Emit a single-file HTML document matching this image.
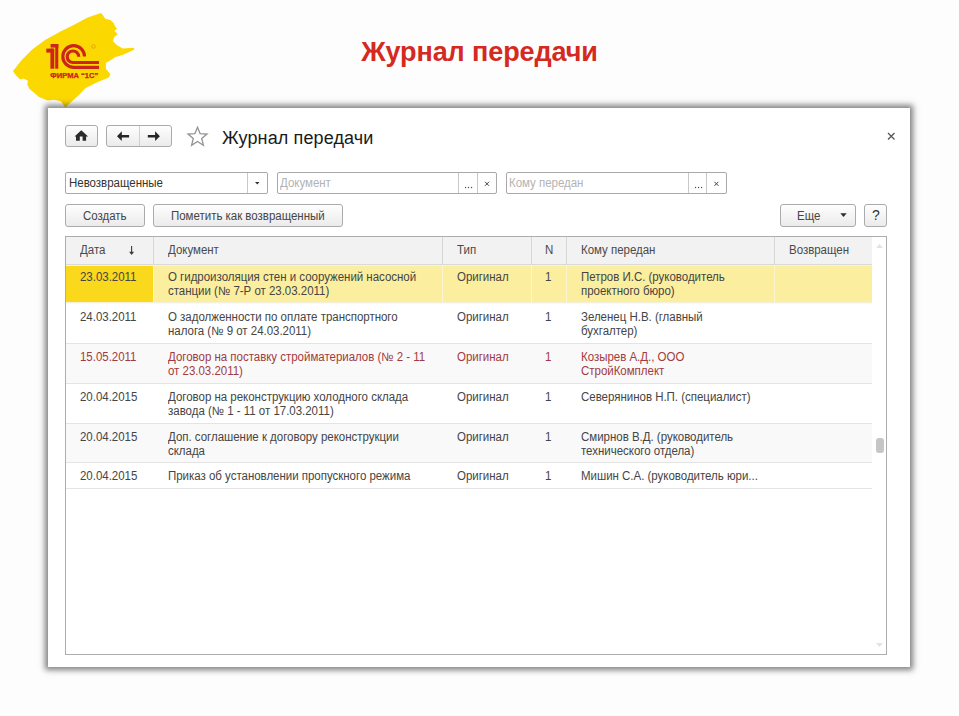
<!DOCTYPE html>
<html><head><meta charset="utf-8">
<style>
*{margin:0;padding:0;box-sizing:border-box}
html,body{width:959px;height:716px;overflow:hidden;background:#fdfdfd;font-family:"Liberation Sans",sans-serif;position:relative}
div,span{position:absolute}
#title{left:0;width:959px;top:39px;height:27px;line-height:27px;text-align:center;font-weight:bold;font-size:27px;letter-spacing:-0.1px;color:#d42a1f;}
#win{left:48px;top:108px;width:862px;height:559px;background:#fff;box-shadow:0 0 6px 3px rgba(0,0,0,0.5);}
#wtitle{left:222px;top:129px;font-size:18px;line-height:18px;letter-spacing:0.12px;color:#1a1a1a;white-space:nowrap}
.btn{border:1px solid #ababab;border-radius:3px;background:linear-gradient(#fefefe,#ebebeb);}
.t12{font-size:12px;line-height:14px;letter-spacing:-0.02px;transform:scaleX(0.958);transform-origin:0 0;white-space:nowrap;color:#454545}
.fld{border:1px solid #a9a9a9;border-radius:2px;background:#fff;height:22px;top:172px}
.sep{top:0;bottom:0;width:1px;background:#c9c9c9}
.tbl{left:65px;top:236px;width:822px;height:419px;border:1px solid #adadad;background:#fff;}
.hl{height:1px;left:66px;width:806px;background:#e4e4e4}
.vl{width:1px}
.ph{color:#b3b3b3}
.red{color:#a23b3d}
</style></head>
<body>
<!-- logo -->
<svg style="position:absolute;left:0;top:0" width="150" height="112" viewBox="0 0 150 112">
<path fill="#fbd800" d="M45.1 40 L60 31.8 L75.1 24.3 L87.6 17.6 L101 13 L102.7 15 L105.2 18.8 L110.3 20.1 L113.6 23 L115.3 26.8 L117 28.5 L114.4 31 L117.8 34.3 L114.4 36.8 L112.8 41 L117 45.2 L122.8 48.5 L133.7 47.7 L134.5 49.4 L123.7 54.4 L115 57.2 L111.7 59.5 L105.9 62.9 L105.9 68.7 L110.5 74.4 L108.2 77.8 L96.7 82.4 L85.3 88.2 L78.4 95.4 L71.1 102 L65.3 107.5 L60.9 101.3 L54.3 99.8 L47.7 100.5 L39 96.9 L33.9 92.5 L29.5 88.9 L27.3 84.5 L28 80.8 L23.6 78.6 L20 79.4 L15.3 74.4 L13 71 L22.2 59.5 L32.5 49.2 Z"/>
<g fill="#cc2519">
<rect x="50.6" y="44" width="7.7" height="3.6"/>
<rect x="55.2" y="44" width="3.1" height="24.7"/>
<rect x="50.4" y="48.6" width="3.9" height="20.1"/>
<rect x="46.3" y="48.6" width="7" height="4"/>
</g>
<g fill="none" stroke="#cc2519" stroke-width="3.2">
<path d="M84.5 56.45 A10.85 10.85 0 1 0 73.65 67.3 L99 67.3"/>
<path d="M78.7 56.75 A5.75 5.75 0 1 0 72.95 62.5 L99 62.5"/>
</g>
<circle cx="93.5" cy="46.5" r="1.8" fill="none" stroke="#e08a3a" stroke-width="0.7"/>
<text x="50.3" y="78.2" font-family="Liberation Sans" font-weight="bold" font-size="6.4" fill="#cc2519" stroke="#cc2519" stroke-width="0.25" textLength="48" lengthAdjust="spacingAndGlyphs">ФИРМА “1С”</text>
</svg>

<div id="title">Журнал передачи</div>
<div id="win"></div>

<!-- toolbar -->
<div class="btn" style="left:65px;top:125px;width:33px;height:22px"></div>
<svg style="position:absolute;left:74px;top:130px" width="15" height="12" viewBox="0 0 15 12">
<path fill="#2b2b2b" d="M7.3 0.3 L14.1 6.6 L12.1 6.6 L12.1 10.8 L8.6 10.8 L8.6 6.6 L5.8 6.6 L5.8 10.8 L2 10.8 L2 6.6 L0.5 6.6 Z"/>
</svg>
<div class="btn" style="left:106px;top:125px;width:66px;height:22px"></div>
<div style="left:139px;top:126px;width:1px;height:20px;background:#cfcfcf"></div>
<svg style="position:absolute;left:115px;top:129px" width="50" height="14" viewBox="0 0 50 14">
<path fill="#262626" d="M2 7.3 L6.8 2.3 L6.8 6 L14.1 6 L14.1 8.6 L6.8 8.6 L6.8 11.9 Z"/>
<path fill="#262626" d="M44.9 7.3 L40.1 2.3 L40.1 6 L32.8 6 L32.8 8.6 L40.1 8.6 L40.1 11.9 Z"/>
</svg>
<svg style="position:absolute;left:186px;top:126px" width="23" height="21" viewBox="0 0 23 21">
<path fill="none" stroke="#939393" stroke-width="1.3" d="M11.5 1.3 L14.1 7.6 L21 8 L15.7 12.4 L17.4 19.2 L11.5 15.4 L5.6 19.2 L7.3 12.4 L2 8 L8.9 7.6 Z"/>
</svg>
<div id="wtitle">Журнал передачи</div>
<svg style="position:absolute;left:887px;top:132px" width="9" height="9" viewBox="0 0 9 9">
<path stroke="#555" stroke-width="1.25" d="M1 1 L7.5 7.5 M7.5 1 L1 7.5"/>
</svg>

<!-- filter fields -->
<div class="fld" style="left:65px;width:203px">
  <div class="sep" style="left:181px"></div>
  <span class="t12" style="left:3px;top:3px;color:#333">Невозвращенные</span>
  <svg style="position:absolute;left:189px;top:9px" width="5" height="3"><path d="M0 0 L4.5 0 L2.25 2.5 Z" fill="#333"/></svg>
</div>
<div class="fld" style="left:277px;width:220px">
  <div class="sep" style="left:180px"></div>
  <div class="sep" style="left:199px"></div>
  <span class="t12 ph" style="left:2px;top:3px">Документ</span>
  <svg style="position:absolute;left:185px;top:8px" width="28" height="9"><g fill="#444"><circle cx="2.6" cy="6.5" r="0.65"/><circle cx="5.6" cy="6.5" r="0.65"/><circle cx="8.6" cy="6.5" r="0.65"/></g><path d="M22 0.8 L26 4.8 M26 0.8 L22 4.8" stroke="#444" stroke-width="1.0"/></svg>
</div>
<div class="fld" style="left:506px;width:221px">
  <div class="sep" style="left:181px"></div>
  <div class="sep" style="left:199px"></div>
  <span class="t12 ph" style="left:2px;top:3px">Кому передан</span>
  <svg style="position:absolute;left:186px;top:8px" width="28" height="9"><g fill="#444"><circle cx="2.6" cy="6.5" r="0.65"/><circle cx="5.6" cy="6.5" r="0.65"/><circle cx="8.6" cy="6.5" r="0.65"/></g><path d="M21.4 0.8 L25.4 4.8 M25.4 0.8 L21.4 4.8" stroke="#444" stroke-width="1.0"/></svg>
</div>

<!-- buttons -->
<div class="btn" style="left:65px;top:204px;width:80px;height:23px"></div>
<span class="t12" style="left:83px;top:209px">Создать</span>
<div class="btn" style="left:153px;top:204px;width:190px;height:23px"></div>
<span class="t12" style="left:171px;top:209px">Пометить как возвращенный</span>
<div class="btn" style="left:780px;top:204px;width:76px;height:23px"></div>
<span class="t12" style="left:797px;top:209px">Еще</span>
<svg style="position:absolute;left:840px;top:213px" width="8" height="5"><path d="M0.3 0.3 L6.7 0.3 L3.5 4 Z" fill="#2e2e2e"/></svg>
<div class="btn" style="left:864px;top:204px;width:23px;height:23px"></div>
<span style="left:872px;top:207px;font-size:14px;line-height:16px;color:#333">?</span>

<!-- table -->
<div class="tbl"></div>
<div style="left:66px;top:237px;width:806px;height:27px;background:#f2f2f2"></div>
<div class="hl" style="top:264px;background:#d9d9d9"></div>
<div class="hl" style="top:265px;background:#fdf6c6"></div>
<!-- row backgrounds -->
<div style="left:66px;top:266px;width:87px;height:36px;background:#fad81c"></div>
<div style="left:153px;top:266px;width:719px;height:36px;background:#fbee9e"></div>
<div class="vl" style="left:153px;top:265px;height:37px;background:#fdf9b0"></div>
<div style="left:66px;top:344px;width:806px;height:39px;background:#f9f9f9"></div>
<div style="left:66px;top:424px;width:806px;height:38px;background:#f9f9f9"></div>
<div class="hl" style="top:302px;background:#f4f0da"></div>
<div class="hl" style="top:303px;background:#f9f9f5"></div>
<div class="hl" style="top:343px"></div>
<div class="hl" style="top:383px"></div>
<div class="hl" style="top:423px"></div>
<div class="hl" style="top:462px"></div>
<div class="hl" style="top:488px"></div>
<!-- header dividers -->
<div class="vl" style="left:153px;top:237px;height:27px;background:#d6d6d6"></div>
<div class="vl" style="left:442px;top:237px;height:27px;background:#d6d6d6"></div>
<div class="vl" style="left:531px;top:237px;height:27px;background:#d6d6d6"></div>
<div class="vl" style="left:566px;top:237px;height:27px;background:#d6d6d6"></div>
<div class="vl" style="left:774px;top:237px;height:27px;background:#d6d6d6"></div>
<!-- selected row dividers -->
<div class="vl" style="left:442px;top:266px;height:36px;background:#fdf6d0"></div>
<div class="vl" style="left:531px;top:266px;height:36px;background:#fdf6d0"></div>
<div class="vl" style="left:566px;top:266px;height:36px;background:#fdf6d0"></div>
<div class="vl" style="left:774px;top:266px;height:36px;background:#fdf6d0"></div>

<!-- header text -->
<span class="t12" style="left:80px;top:243px;color:#4a4a4a">Дата</span>
<svg style="position:absolute;left:128px;top:244px" width="8" height="12"><path d="M3.6 2 L3.6 8.5" stroke="#3a3a3a" stroke-width="1.1" fill="none"/><path d="M1.1 7.7 L6.1 7.7 L3.6 11 Z" fill="#3a3a3a"/></svg>
<span class="t12" style="left:168px;top:243px;color:#4a4a4a">Документ</span>
<span class="t12" style="left:457px;top:243px;color:#4a4a4a">Тип</span>
<span class="t12" style="left:545px;top:243px;color:#4a4a4a">N</span>
<span class="t12" style="left:581px;top:243px;color:#4a4a4a">Кому передан</span>
<span class="t12" style="left:789px;top:243px;color:#4a4a4a">Возвращен</span>
<!-- scroll -->
<svg style="position:absolute;left:876px;top:244px" width="7" height="5"><path d="M0 4 L3.5 0 L7 4 Z" fill="#e3e3e3"/></svg>
<div style="left:876px;top:438px;width:8px;height:15px;border-radius:3px;background:#c6c6c6"></div>
<svg style="position:absolute;left:876px;top:643px" width="7" height="5"><path d="M0 0 L7 0 L3.5 4 Z" fill="#e3e3e3"/></svg>

<!-- rows -->
<span class="t12" style="left:80px;top:270px">23.03.2011</span>
<span class="t12" style="left:168px;top:270px">О гидроизоляция стен и сооружений насосной<br>станции (№ 7-Р от 23.03.2011)</span>
<span class="t12" style="left:457px;top:270px">Оригинал</span>
<span class="t12" style="left:545px;top:270px">1</span>
<span class="t12" style="left:581px;top:270px">Петров И.С. (руководитель<br>проектного бюро)</span>

<span class="t12" style="left:80px;top:310px">24.03.2011</span>
<span class="t12" style="left:168px;top:310px">О задолженности по оплате транспортного<br>налога (№ 9 от 24.03.2011)</span>
<span class="t12" style="left:457px;top:310px">Оригинал</span>
<span class="t12" style="left:545px;top:310px">1</span>
<span class="t12" style="left:581px;top:310px">Зеленец Н.В. (главный<br>бухгалтер)</span>

<span class="t12 red" style="left:80px;top:350px">15.05.2011</span>
<span class="t12 red" style="left:168px;top:350px">Договор на поставку стройматериалов (№ 2 - 11<br>от 23.03.2011)</span>
<span class="t12 red" style="left:457px;top:350px">Оригинал</span>
<span class="t12 red" style="left:545px;top:350px">1</span>
<span class="t12 red" style="left:581px;top:350px">Козырев А.Д., ООО<br>СтройКомплект</span>

<span class="t12" style="left:80px;top:390px">20.04.2015</span>
<span class="t12" style="left:168px;top:390px">Договор на реконструкцию холодного склада<br>завода (№ 1 - 11 от 17.03.2011)</span>
<span class="t12" style="left:457px;top:390px">Оригинал</span>
<span class="t12" style="left:545px;top:390px">1</span>
<span class="t12" style="left:581px;top:390px">Северянинов Н.П. (специалист)</span>

<span class="t12" style="left:80px;top:430px">20.04.2015</span>
<span class="t12" style="left:168px;top:430px">Доп. соглашение к договору реконструкции<br>склада</span>
<span class="t12" style="left:457px;top:430px">Оригинал</span>
<span class="t12" style="left:545px;top:430px">1</span>
<span class="t12" style="left:581px;top:430px">Смирнов В.Д. (руководитель<br>технического отдела)</span>

<span class="t12" style="left:80px;top:469px">20.04.2015</span>
<span class="t12" style="left:168px;top:469px">Приказ об установлении пропускного режима</span>
<span class="t12" style="left:457px;top:469px">Оригинал</span>
<span class="t12" style="left:545px;top:469px">1</span>
<span class="t12" style="left:581px;top:469px">Мишин С.А. (руководитель юри...</span>
</body></html>
